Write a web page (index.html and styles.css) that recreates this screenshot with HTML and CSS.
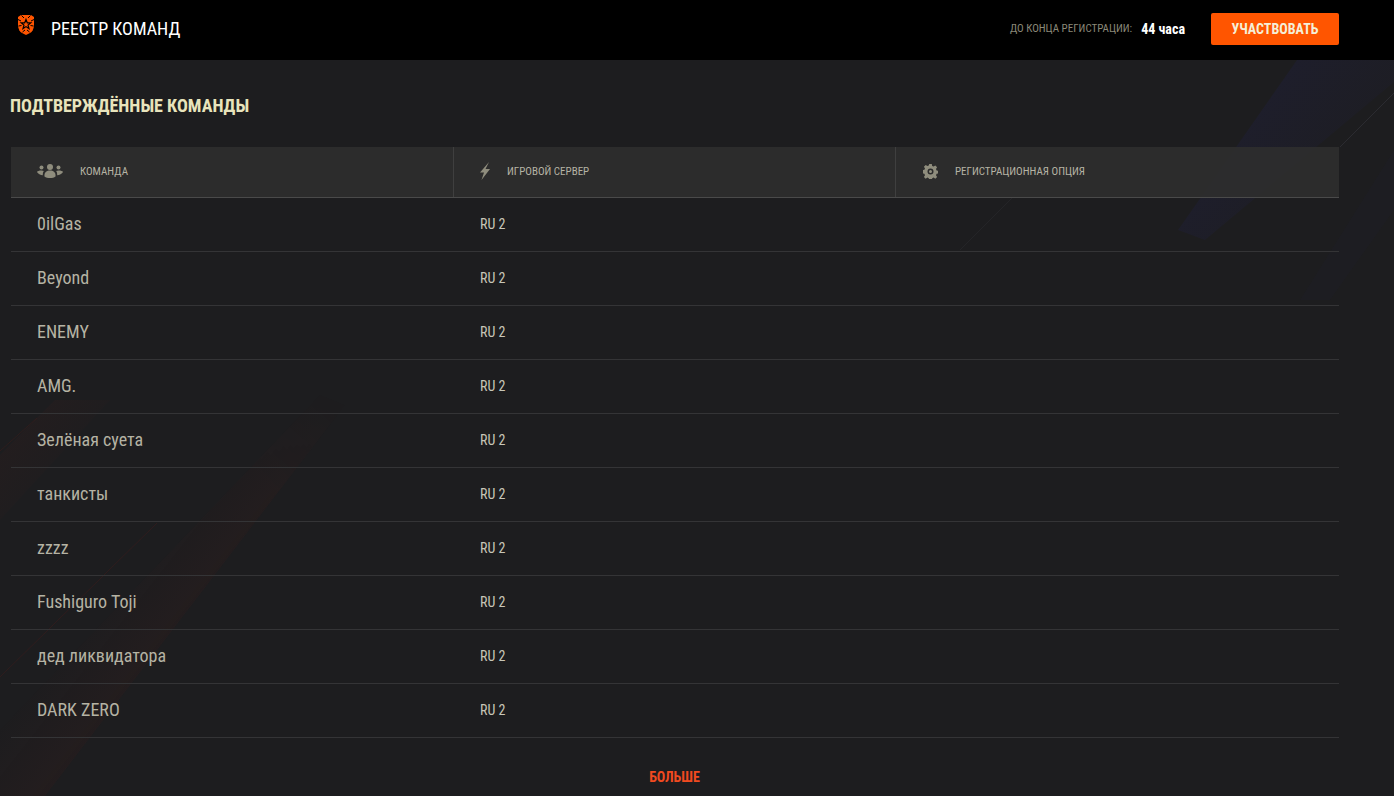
FILE: index.html
```html
<!DOCTYPE html>
<html lang="ru">
<head>
<meta charset="utf-8">
<title>Реестр команд</title>
<link rel="stylesheet" href="styles.css">
</head>
<body>
<svg class="backdrop" viewBox="0 0 1394 796" width="1394" height="796" aria-hidden="true">
  <defs>
    <linearGradient id="redband" gradientUnits="userSpaceOnUse" x1="120" y1="560" x2="260" y2="670">
      <stop offset="0" stop-color="#7a2018" stop-opacity="0"/>
      <stop offset=".8" stop-color="#7a2018" stop-opacity=".12"/>
      <stop offset="1" stop-color="#7a2018" stop-opacity="0"/>
    </linearGradient>
    <linearGradient id="redfade" gradientUnits="userSpaceOnUse" x1="170" y1="600" x2="345" y2="395">
      <stop offset="0" stop-color="#fff"/>
      <stop offset=".55" stop-color="#fff"/>
      <stop offset="1" stop-color="#000"/>
    </linearGradient>
    <mask id="redmask" maskUnits="userSpaceOnUse" x="0" y="0" width="1394" height="796">
      <rect width="1394" height="796" fill="url(#redfade)"/>
    </mask>
    <linearGradient id="redband2" gradientUnits="userSpaceOnUse" x1="0" y1="440" x2="70" y2="500">
      <stop offset="0" stop-color="#7a2018" stop-opacity=".07"/>
      <stop offset="1" stop-color="#7a2018" stop-opacity="0"/>
    </linearGradient>
    <linearGradient id="blueband" gradientUnits="userSpaceOnUse" x1="1210" y1="130" x2="1310" y2="210">
      <stop offset="0" stop-color="#25258a" stop-opacity=".13"/>
      <stop offset="1" stop-color="#25258a" stop-opacity=".04"/>
    </linearGradient>
  </defs>
  <polygon fill="url(#redband)" mask="url(#redmask)" points="0,796 45,796 345,405 320,395 0,730"/>
  <polygon fill="url(#redband2)" points="0,455 55,400 110,400 0,520"/>
  <polygon fill="url(#blueband)" points="1297,60 1394,60 1394,82 1205,240 1178,230"/>
  <polygon fill="#25258a" fill-opacity=".03" points="1394,150 1394,210 1330,300 1300,300"/>
  <g fill="none" stroke-width="1">
    <path stroke="#8a8a9a" stroke-opacity=".14" d="M1394 93L1340 147"/>
    <path stroke="#7a2018" stroke-opacity=".2" d="M0 677L157 523"/>
    <path stroke="#7a2018" stroke-opacity=".18" d="M0 451L37 418"/>
    <path stroke="#8a8a9a" stroke-opacity=".07" d="M1020 190L960 250"/>
  </g>
</svg>
<header class="topbar">
  <div class="brand">
    <svg class="logo" viewBox="0 0 16 20" width="16" height="20"><path fill="#ff5500" d="M3 0h10l3 2v8c0 4-2 7-4 8l-4 2-4-2c-2-1-4-4-4-8V2z"/><path fill="none" stroke="#000" stroke-width="1.200" d="M8 4.500l1.300 3.300h3.500l-2.800 2.300 1 3.500L8 11.600l-3 2 1-3.500-2.800-2.300h3.500z"/><path fill="none" stroke="#000" stroke-width="1" d="M3.500 .5L6 3M12.500 .5L10 3M0 4.500L3 6M16 4.500L13 6M.5 11l3-.5M15.500 11l-3-.5M4.500 17L7 15M11.500 17L9 15"/></svg>
    <span class="brand-title">РЕЕСТР КОМАНД</span>
  </div>
  <div class="reg">
    <span class="reg-label">ДО КОНЦА РЕГИСТРАЦИИ:</span>
    <span class="reg-time">44 часа</span>
    <a class="cta">УЧАСТВОВАТЬ</a>
  </div>
</header>
<main class="content">
  <h1 class="title">ПОДТВЕРЖДЁННЫЕ КОМАНДЫ</h1>
  <div class="table">
    <div class="row head">
      <div class="cell"><svg class="ico ico-users" width="26" height="14" viewBox="0 0 26 14"><g fill="#8f8d7d"><circle cx="13" cy="3" r="3"/><circle cx="4.500" cy="3.500" r="2"/><circle cx="21.500" cy="3.500" r="2"/><path d="M7.500 12.500C7 8.500 9.500 6.500 13 6.500s6 2 5.500 6c-2.500 2-8.500 2-11 0z"/><path d="M0 8C.5 7 2 6.500 4.500 6.500c1 0 1.800.2 2.400.5C6 8 5.800 9.500 5.800 11.200 3.500 11 1 10 0 8zM26 8C25.500 7 24 6.500 21.500 6.500c-1 0-1.800.2-2.400.5.900 1 1.100 2.500 1.100 4.200 2.300-.2 4.800-1.200 5.800-3.200z"/></g></svg><span>КОМАНДА</span></div>
      <div class="cell"><svg class="ico ico-bolt" width="10" height="18" viewBox="0 0 10 18"><path fill="#8f8d7d" d="M9 0L0 10.500h4L1.500 18 10 7H5.500z"/></svg><span>ИГРОВОЙ СЕРВЕР</span></div>
      <div class="cell"><svg class="ico ico-gear" width="15" height="15" viewBox="0 0 15 15"><path fill="#8f8d7d" fill-rule="evenodd" d="M6.200 0h2.600l.4 2 1.400.6 1.700-1.100 1.800 1.800-1.100 1.700.6 1.400 2 .4v2.600l-2 .4-.6 1.400 1.100 1.700-1.800 1.800-1.700-1.100-1.400.6-.4 2H6.200l-.4-2-1.400-.6-1.700 1.100-1.800-1.800 1.100-1.700-.6-1.400-2-.4V6.200l2-.4.600-1.400-1.100-1.700 1.800-1.800 1.700 1.100 1.400-.6zM7.500 4.500a3 3 0 1 0 0 6 3 3 0 0 0 0-6zM7.500 6a1.500 1.500 0 1 1 0 3 1.500 1.500 0 0 1 0-3z"/></svg><span>РЕГИСТРАЦИОННАЯ ОПЦИЯ</span></div>
    </div>
    <div class="row"><div class="name">0ilGas</div><div class="server">RU 2</div></div>
    <div class="row"><div class="name">Beyond</div><div class="server">RU 2</div></div>
    <div class="row"><div class="name">ENEMY</div><div class="server">RU 2</div></div>
    <div class="row"><div class="name">AMG.</div><div class="server">RU 2</div></div>
    <div class="row"><div class="name">Зелёная суета</div><div class="server">RU 2</div></div>
    <div class="row"><div class="name">танкисты</div><div class="server">RU 2</div></div>
    <div class="row"><div class="name">zzzz</div><div class="server">RU 2</div></div>
    <div class="row"><div class="name">Fushiguro Toji</div><div class="server">RU 2</div></div>
    <div class="row"><div class="name">дед ликвидатора</div><div class="server">RU 2</div></div>
    <div class="row"><div class="name">DARK ZERO</div><div class="server">RU 2</div></div>
  </div>
  <a class="more">БОЛЬШЕ</a>
</main>
</body>
</html>
```
FILE: styles.css
```css
* { box-sizing: border-box; }
html, body { margin: 0; height: 100%; }
body {
  position: relative;
  background: #1d1d1f;
  color: #b5b3a4;
  font-family: Roboto, "Liberation Sans", sans-serif;
  font-stretch: condensed;
  overflow: hidden;
  height: 796px;
}
.backdrop { position: absolute; left: 0; top: 0; }
.topbar {
  position: relative;
  height: 60px;
  background: #000;
  display: flex;
  justify-content: space-between;
  align-items: center;
  padding: 0 55px 3px 18px;
}
.brand { display: flex; align-items: center; gap: 17px; }
.logo { margin-top: -7px; }
.brand-title { color: #fff; font-size: 18px; }
.reg { display: flex; align-items: center; }
.reg-label { color: #8a8878; font-size: 11px; margin-right: 9px; }
.reg-time { color: #fff; font-size: 14px; font-weight: 700; margin-right: 26px; }
.cta {
  width: 128px; height: 32px;
  background: #ff5500;
  border-radius: 2px;
  color: #f5efd8;
  font-size: 14px; font-weight: 700;
  display: flex; align-items: center; justify-content: center;
}
.content {
  position: relative;
  padding: 0 55px 0 11px;
  height: 736px;
}
.title {
  margin: 0 0 0 -1px;
  padding-top: 35px;
  height: 87px;
  font-size: 18px; font-weight: 700;
  color: #e8e4bc;
}
.table { display: flex; flex-direction: column; }
.row {
  height: 54px;
  display: grid;
  grid-template-columns: 443px 442px 1fr;
  align-items: center;
  border-bottom: 1px solid #343436;
  padding-bottom: 2px;
}
.head {
  height: 51px;
  padding-bottom: 0;
  background: rgba(46, 46, 46, .92);
  border-bottom: 1px solid #4a4a4a;
  align-items: stretch;
  font-size: 11px;
  color: #b5b3a4;
}
.cell {
  display: flex; align-items: center;
  padding: 0 0 2px 26px;
  border-right: 1px solid #3f3f3f;
}
.cell:last-child { border-right: 0; }
.ico { margin-right: 17px; flex: none; }
.ico-gear { margin-left: 1px; }
.name { padding-left: 26px; font-size: 18px; color: #b5b3a4; }
.server { padding-left: 26px; font-size: 14px; color: #c8c6b8; }
.more {
  display: block;
  text-align: center;
  padding-right: 1px;
  color: #f04a20;
  font-size: 14px; font-weight: 700;
  margin-top: 31px;
}
```
